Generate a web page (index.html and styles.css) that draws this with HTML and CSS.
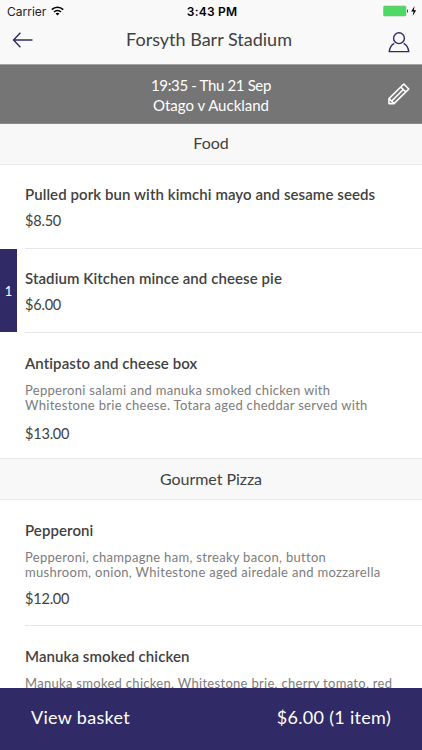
FILE: index.html
```html
<!DOCTYPE html>
<html lang="en">
<head>
    <meta charset="UTF-8">
    <meta name="viewport" content="width=device-width, initial-scale=1">
    <title>Forsyth Barr Stadium</title>
    <link rel="stylesheet" href="styles.css">
</head>
<body>
    <header class="header">
        <div class="status-bar">
            <div class="carrier">
                <span>Carrier</span>
                <svg width="13" height="10" viewBox="0 0 13 10" fill="none" stroke="#000" stroke-width="1.6">
                    <path d="M0.8 3.6C4 0.4 9 0.4 12.2 3.6"/>
                    <path d="M3 6C5 4 8 4 10 6"/>
                    <path d="M6.5 9.4L4.6 7.4C5.7 6.5 7.3 6.5 8.4 7.4Z" fill="#000" stroke="none"/>
                </svg>
            </div>
            <span class="clock">3:43 PM</span>
            <div class="battery">
                <svg width="34" height="12" viewBox="0 0 34 12">
                    <rect x="0.5" y="1" width="22.5" height="10" rx="1" fill="#4cd964" stroke="#8fb596" stroke-width="0.6"/>
                    <path d="M24 4.2C25.4 4.6 25.4 7.4 24 7.8Z" fill="#333"/>
                    <path d="M31.6 1L28.2 6.6H30.6L29.6 11L33.2 5.2H30.8Z" fill="#000"/>
                </svg>
            </div>
        </div>
        <nav class="nav-bar">
            <svg class="back" width="22" height="18" viewBox="0 0 22 18" fill="none" stroke="#302b66" stroke-width="1.4">
                <path d="M20.5 9H1.5M8.4 1.7L1.5 9L8.4 16.3"/>
            </svg>
            <h1 class="title">Forsyth Barr Stadium</h1>
            <svg width="22" height="22" viewBox="0 0 22 22" fill="none" stroke="#302b66" stroke-width="1.4">
                <circle cx="11" cy="7.2" r="5.4"/>
                <path d="M6.3 12.4C3.5 13.9 1.7 16.6 1.3 20.6H20.7C20.3 16.6 18.5 13.9 15.7 12.4"/>
            </svg>
        </nav>
    </header>

    <div class="event">
        <div class="event-info">
            <div class="event-time">19:35 - Thu 21 Sep</div>
            <div class="event-name">Otago v Auckland</div>
        </div>
        <svg class="edit" width="24" height="24" viewBox="0 0 24 24" fill="none" stroke="#fff" stroke-width="1.6" stroke-linejoin="round">
            <path d="M2 21.6V16.6L16.8 2L21.8 7L7 21.6Z"/>
            <path d="M13.8 5L18.8 10M16.3 7.5L4.6 19.1M2.2 16.8L6.8 21.4"/>
        </svg>
    </div>

    <main class="menu">
        <h2 class="section first">Food</h2>
        <div class="item">
            <h3 class="name">Pulled pork bun with kimchi mayo and sesame seeds</h3>
            <div class="price">$8.50</div>
        </div>
        <div class="item">
            <span class="count">1</span>
            <h3 class="name">Stadium Kitchen mince and cheese pie</h3>
            <div class="price">$6.00</div>
        </div>
        <div class="item last">
            <h3 class="name">Antipasto and cheese box</h3>
            <p class="desc">Pepperoni salami and manuka smoked chicken with<br>Whitestone brie cheese. Totara aged cheddar served with</p>
            <div class="price">$13.00</div>
        </div>

        <h2 class="section">Gourmet Pizza</h2>
        <div class="item pizza">
            <h3 class="name">Pepperoni</h3>
            <p class="desc">Pepperoni, champagne ham, streaky bacon, button<br>mushroom, onion, Whitestone aged airedale and mozzarella</p>
            <div class="price">$12.00</div>
        </div>
        <div class="item pizza">
            <h3 class="name">Manuka smoked chicken</h3>
            <p class="desc">Manuka smoked chicken, Whitestone brie, cherry tomato, red</p>
        </div>
    </main>

    <footer class="basket">
        <span>View basket</span>
        <span class="total">$6.00 (1 item)</span>
    </footer>
</body>
</html>
```
FILE: styles.css
```css
* {
    box-sizing: border-box;
}

body {
    margin: 0;
    height: 750px;
    display: flex;
    flex-direction: column;
    overflow: hidden;
    background: #fff;
    color: #414141;
    font-family: Lato, sans-serif;
}

h1, h2, h3, p {
    margin: 0;
    font-weight: 400;
}

svg {
    display: block;
}

.header {
    flex: none;
    height: 65px;
    background: #f9f9f9;
    border-bottom: 1px solid #a3a3a3;
}

.status-bar {
    display: grid;
    grid-template-columns: 1fr auto 1fr;
    align-items: center;
    height: 22px;
    padding: 0 5px 0 7px;
    color: #000;
    font: 12px Inter, sans-serif;
}

.carrier {
    display: flex;
    align-items: center;
    gap: 5px;
    color: #222;
}

.clock {
    font-weight: 600;
    letter-spacing: 0.2px;
}

.battery {
    justify-self: end;
}

.nav-bar {
    display: flex;
    justify-content: space-between;
    align-items: center;
    height: 38px;
    padding: 1px 12px 0 12px;
}

.back {
    margin-bottom: 3px;
}

.title {
    margin: -5px 4px 0 0;
    font-size: 18px;
}

.event {
    flex: none;
    display: grid;
    grid-template-columns: 24px 1fr 24px;
    align-items: center;
    height: 59px;
    padding: 0 11px;
    background: #757575;
    border-bottom: 1px solid #8b8b8b;
    color: #fff;
    font-size: 15px;
    line-height: 20px;
    text-align: center;
}

.event-info {
    grid-column: 2;
    padding-top: 2px;
}

.event-time {
    letter-spacing: -0.35px;
}

.menu {
    flex: 1;
    min-height: 0;
    overflow: hidden;
}

.section {
    height: 42px;
    background: #f8f8f8;
    border-top: 1px solid #e8e8e8;
    border-bottom: 1px solid #ebebeb;
    font-size: 16px;
    line-height: 39px;
    text-align: center;
    letter-spacing: -0.05px;
}

.section.first {
    height: 41px;
    border-top: 0;
    line-height: 38px;
}

.item {
    position: relative;
    margin-left: 25px;
    height: 84px;
    padding-top: 19px;
    border-bottom: 1px solid #e6e6e6;
}

.name {
    font-size: 15px;
    font-weight: 600;
    line-height: 20px;
    letter-spacing: 0.08px;
}

.price {
    margin-top: 7px;
    font-size: 14.5px;
    line-height: 20px;
    letter-spacing: -0.2px;
}

.desc {
    margin-top: 10px;
    color: #7c7c7c;
    font-size: 13px;
    line-height: 15px;
    letter-spacing: 0.3px;
    white-space: nowrap;
}

.desc + .price {
    margin-top: 11px;
}

.item.last {
    height: 125px;
    padding-top: 20px;
    border-bottom: 0;
}

.item.pizza {
    height: 126px;
    padding-top: 20px;
}

.item.pizza .price {
    margin-top: 9px;
}

.count {
    position: absolute;
    left: -25px;
    top: 0;
    width: 17px;
    height: 83px;
    background: #302b66;
    color: #fff;
    font-size: 13px;
    line-height: 84px;
    text-align: center;
}

.basket {
    flex: none;
    display: flex;
    justify-content: space-between;
    align-items: center;
    height: 62px;
    padding: 0 31px 5px 31px;
    background: #302b66;
    color: #fff;
    font-size: 18px;
    letter-spacing: 0.3px;
}
```
